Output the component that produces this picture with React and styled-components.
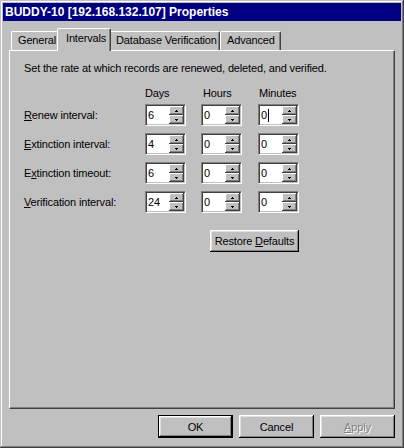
import React from "react";
import styled, { createGlobalStyle } from "styled-components";

const GlobalStyle = createGlobalStyle`
  html, body {
    margin: 0;
    padding: 0;
    background: #c0c0c0;
  }
  body {
    font-family: "Liberation Sans", Arial, sans-serif;
    font-size: 11px;
    letter-spacing: -0.15px;
    color: #000;
  }
`;

const COLS = "121px 56px 57px 41px";

const Window = styled.div`
  width: 404px;
  height: 448px;
  box-sizing: border-box;
  padding: 3px;
  background: #c0c0c0;
  display: flex;
  flex-direction: column;
  box-shadow: inset -1px -1px #404040, inset 1px 1px #c0c0c0,
    inset -2px -2px #808080, inset 2px 2px #fff;
`;

const TitleBar = styled.div`
  height: 18px;
  line-height: 18px;
  padding-left: 2px;
  background: #000080;
  color: #fff;
  font-weight: bold;
  font-size: 12px;
  letter-spacing: 0;
  white-space: nowrap;
`;

const Body = styled.div`
  flex: 1;
  padding: 7px 6px 0;
  display: flex;
  flex-direction: column;
`;

const TabStrip = styled.div`
  display: flex;
  align-items: flex-end;
  height: 22px;
  padding-left: 2px;
  position: relative;
  z-index: 1;
`;

const Tab = styled.div`
  box-sizing: border-box;
  width: ${(p) => p.$w}px;
  height: ${(p) => (p.$active ? 23 : 19)}px;
  margin: ${(p) => (p.$active ? "0 -2px -1px" : "0")};
  padding-top: ${(p) => (p.$active ? 3 : 2)}px;
  padding-left: ${(p) => (p.$active ? 8 : 6)}px;
  background: #c0c0c0;
  border-top: 1px solid #fff;
  border-left: 1px solid #fff;
  border-right: 1px solid #404040;
  border-radius: 2px 2px 0 0;
  box-shadow: inset -1px 0 #808080;
  position: relative;
  z-index: ${(p) => (p.$active ? 2 : 0)};
  white-space: nowrap;
  line-height: 13px;
`;

const Panel = styled.div`
  height: 359px;
  box-sizing: border-box;
  border-top: 1px solid #fff;
  border-left: 1px solid #fff;
  border-right: 1px solid #404040;
  border-bottom: 1px solid #404040;
  box-shadow: inset -1px -1px #808080;
  padding: 11px 14px 0;
`;

const Intro = styled.div`
  line-height: 13px;
  white-space: nowrap;
`;

const HeaderRow = styled.div`
  display: grid;
  grid-template-columns: ${COLS};
  margin-top: 12px;
  margin-bottom: 4px;
  line-height: 13px;
`;

const ColHead = styled.span`
  padding-left: ${(p) => p.$pad || 0}px;
`;

const Rows = styled.div`
  display: grid;
  grid-template-columns: ${COLS};
  grid-auto-rows: 22px;
  row-gap: 7px;
  align-items: center;
`;

const Label = styled.span`
  line-height: 13px;
  white-space: nowrap;
`;

const Spin = styled.div`
  width: 41px;
  height: 22px;
  box-sizing: border-box;
  display: flex;
  background: #fff;
  border: 1px solid;
  border-color: #808080 #fff #fff #808080;
  box-shadow: inset 1px 1px #404040, inset -1px -1px #c0c0c0;
  padding: 1px;
`;

const Field = styled.div`
  flex: 1;
  padding-left: 1px;
  line-height: 18px;
  display: flex;
  align-items: center;
`;

const Caret = styled.span`
  display: inline-block;
  width: 1px;
  height: 13px;
  background: #000;
  margin-left: 1px;
`;

const Arrows = styled.div`
  width: 15px;
  display: flex;
  flex-direction: column;
`;

const ArrowBtn = styled.div`
  flex: 1;
  background: #c0c0c0;
  display: flex;
  align-items: center;
  justify-content: center;
  box-shadow: inset -1px -1px #404040, inset 1px 1px #fff,
    inset -2px -2px #808080;
`;

const RestoreRow = styled.div`
  width: 275px;
  display: flex;
  justify-content: flex-end;
  margin-top: 17px;
`;

const Button = styled.button`
  width: ${(p) => p.$w || 75}px;
  height: ${(p) => p.$h || 23}px;
  box-sizing: border-box;
  padding: 0;
  font-family: "Liberation Sans", Arial, sans-serif;
  font-size: 11px;
  letter-spacing: -0.15px;
  background: #c0c0c0;
  color: ${(p) => (p.disabled ? "#808080" : "#000")};
  text-shadow: ${(p) => (p.disabled ? "1px 1px #fff" : "none")};
  border: ${(p) => (p.$default ? "1px solid #000" : "none")};
  box-shadow: inset -1px -1px #000, inset 1px 1px #fff,
    inset -2px -2px #808080, inset 2px 2px #dfdfdf;
`;

const Footer = styled.div`
  display: flex;
  justify-content: flex-end;
  gap: 6px;
  margin-top: 6px;
`;

const Tri = ({ down }) => (
  <svg width="3" height="2" shapeRendering="crispEdges">
    <rect x={1} y={down ? 1 : 0} width={1} height={1} fill="#000" />
    <rect x={0} y={down ? 0 : 1} width={3} height={1} fill="#000" />
  </svg>
);

const Spinner = ({ value, caret }) => (
  <Spin>
    <Field>
      {value}
      {caret && <Caret />}
    </Field>
    <Arrows>
      <ArrowBtn>
        <Tri />
      </ArrowBtn>
      <ArrowBtn>
        <Tri down />
      </ArrowBtn>
    </Arrows>
  </Spin>
);

const rows = [
  { pre: "", key: "R", post: "enew interval:", v: ["6", "0", "0"], caret: true },
  { pre: "", key: "E", post: "xtinction interval:", v: ["4", "0", "0"] },
  { pre: "E", key: "x", post: "tinction timeout:", v: ["6", "0", "0"] },
  { pre: "", key: "V", post: "erification interval:", v: ["24", "0", "0"] },
];

export default function App() {
  return (
    <>
      <GlobalStyle />
      <Window>
        <TitleBar>BUDDY-10 [192.168.132.107] Properties</TitleBar>
        <Body>
          <TabStrip>
            <Tab $w={48}>General</Tab>
            <Tab $w={54} $active>
              Intervals
            </Tab>
            <Tab $w={111}>Database Verification</Tab>
            <Tab $w={61}>Advanced</Tab>
          </TabStrip>
          <Panel>
            <Intro>
              Set the rate at which records are renewed, deleted, and verified.
            </Intro>
            <HeaderRow>
              <span />
              <ColHead>Days</ColHead>
              <ColHead $pad={2}>Hours</ColHead>
              <ColHead $pad={1}>Minutes</ColHead>
            </HeaderRow>
            <Rows>
              {rows.map((r) => (
                <React.Fragment key={r.post}>
                  <Label>
                    {r.pre}
                    <u>{r.key}</u>
                    {r.post}
                  </Label>
                  <Spinner value={r.v[0]} />
                  <Spinner value={r.v[1]} />
                  <Spinner value={r.v[2]} caret={r.caret} />
                </React.Fragment>
              ))}
            </Rows>
            <RestoreRow>
              <Button $w={89} $h={22}>
                Restore <u>D</u>efaults
              </Button>
            </RestoreRow>
          </Panel>
          <Footer>
            <Button $default>OK</Button>
            <Button>Cancel</Button>
            <Button disabled>
              <u>A</u>pply
            </Button>
          </Footer>
        </Body>
      </Window>
    </>
  );
}
